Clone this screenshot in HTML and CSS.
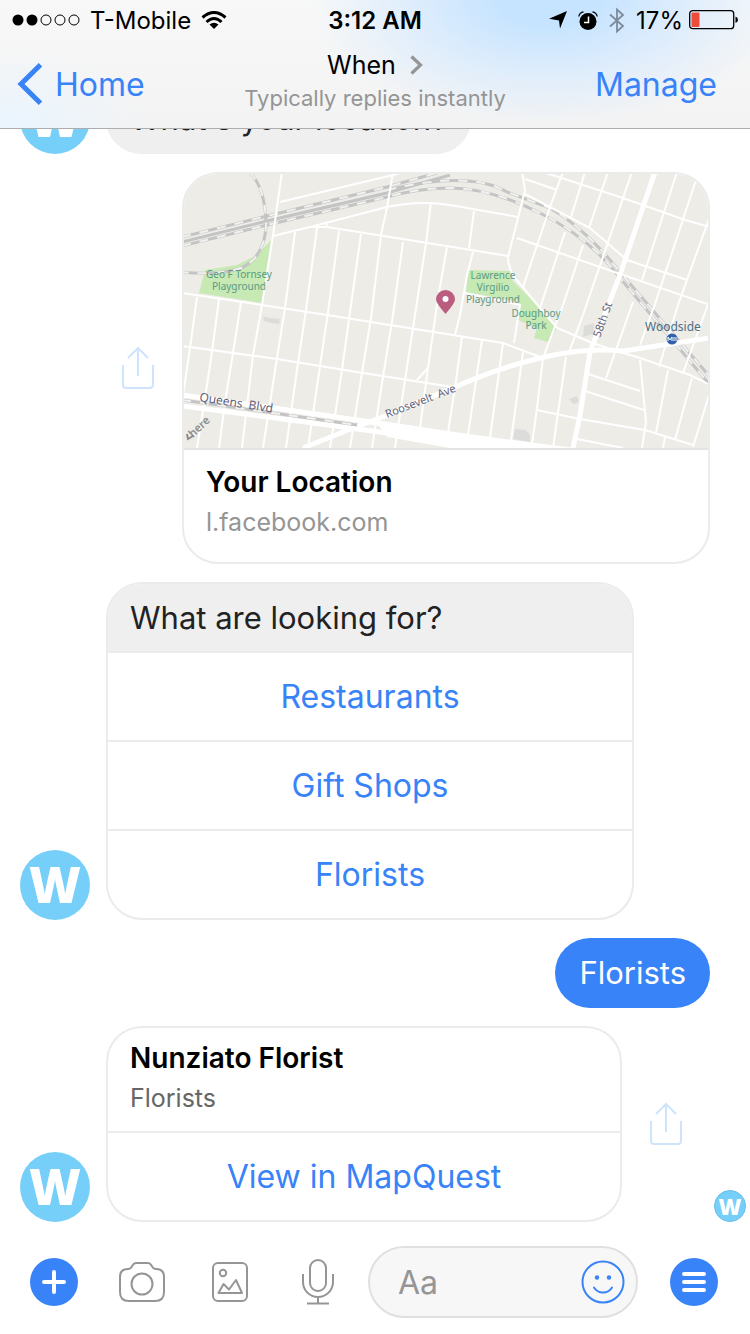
FILE: index.html
```html
<!DOCTYPE html>
<html lang="en">
<head>
    <meta charset="UTF-8">
    <meta name="viewport" content="width=device-width, initial-scale=1.0">
    <title>When</title>
    <link rel="stylesheet" href="styles.css">
</head>
<body>
    <header class="top-bar">
        <div class="status">
            <div class="status-left">
                <svg class="signal" width="68" height="12" viewBox="0 0 68 12">
                    <circle cx="6" cy="6" r="5.5"/>
                    <circle cx="20" cy="6" r="5.5"/>
                    <g fill="none" stroke="#000">
                        <circle cx="34" cy="6" r="5"/>
                        <circle cx="48" cy="6" r="5"/>
                        <circle cx="62" cy="6" r="5"/>
                    </g>
                </svg>
                <span>T-Mobile</span>
                <svg class="wifi" width="26" height="18" viewBox="0 0 26 18">
                    <g fill="none" stroke="#000" stroke-width="3">
                        <path d="M1.5 6.5Q13-3.5 24.5 6.5"/>
                        <path d="M5.5 11Q13 4 20.5 11"/>
                    </g>
                    <path d="M13 18L8.5 13.5Q13 10 17.5 13.5Z"/>
                </svg>
            </div>
            <div class="time">3:12 AM</div>
            <div class="status-right">
                <svg width="18" height="18" viewBox="0 0 18 18"><path d="M18 0L11 17.5L10 9.500L0 7.800Z"/></svg>
                <svg width="20" height="19" viewBox="0 0 20 19">
                    <circle cx="10" cy="10.500" r="8.500"/>
                    <path d="M10.500 5.500V11.500H6" fill="none" stroke="#fff" stroke-width="1.500"/>
                    <path d="M.8 5.500Q1.500 1.500 5.500.8M14.500.8Q18.500 1.500 19.200 5.500" fill="none" stroke="#000" stroke-width="1.300"/>
                </svg>
                <svg width="16" height="27" viewBox="0 0 16 27"><path d="M1 7.500L14 19L8 24.500V2.500L14 8L1 19.500" fill="none" stroke="#7b8b9b" stroke-width="1.800"/></svg>
                <div class="battery">
                    <span>17%</span>
                    <svg width="49" height="20" viewBox="0 0 49 20">
                        <rect x=".7" y=".7" width="44" height="18" rx="3" fill="none" stroke="#000" stroke-width="1.300"/>
                        <rect x="2.500" y="2.500" width="8" height="14.500" rx="1" fill="#ee4c3b"/>
                        <path d="M46.500 6.500Q49 7.500 49 9.800T46.500 13Z"/>
                    </svg>
                </div>
            </div>
        </div>
        <nav class="nav">
            <a href="#" class="back">
                <svg width="26" height="42" viewBox="0 0 26 42"><path d="M23.500 1.800L4 21L23.500 40.200" fill="none" stroke="#3883f8" stroke-width="5"/></svg>
                Home
            </a>
            <div class="title">
                <a href="#" class="name">When
                    <svg width="13" height="20" viewBox="0 0 13 20"><path d="M1.500 1.500L10.500 10L1.500 18.500" fill="none" stroke="#959595" stroke-width="3.200"/></svg>
                </a>
                <p>Typically replies instantly</p>
            </div>
            <a href="#" class="manage">Manage</a>
        </nav>
    </header>

    <main class="chat">
        <div class="row received">
            <div class="avatar">W</div>
            <div class="bubble">What's your location?</div>
        </div>

        <div class="row sent location">
            <button type="button" class="share" aria-label="Share location">
                <svg width="32" height="42" viewBox="0 0 32 42"><path d="M1 18V37.500Q1 41 4.500 41H27.500Q31 41 31 37.500V18M16 29V1M6 11L16 1L26 11" fill="none" stroke="#cfe3fd" stroke-width="2"/></svg>
            </button>
            <article class="card">
                <svg class="map" viewBox="184 174 524 274" preserveAspectRatio="xMidYMid slice" role="img" aria-label="Map of your location">
                    <rect x="182" y="172" width="528" height="278" fill="#edece7"/>
                    <!-- parks -->
                    <g fill="#c7e9b3">
                        <path d="M271 240L262 303L199 293L205 270L237 265L257 255Z"/>
                        <path d="M468 270L466 292L520 302L518 320L537 328L534 338L548 342L557 328L540 308L512 280L510 271Z"/>
                    </g>
                    <!-- buildings -->
                    <g fill="#dcdcda">
                        <path d="M263 316L269 318L280 319L279 324L271 323L264 321Z"/>
                        <path d="M584 326L594 323L593 334L583 337Z"/>
                        <path d="M569 399L577 396L579 402L573 404Z"/>
                        <path d="M515 429L526 430L530 435L530 442L513 439Z"/>
                    </g>
                    <!-- railways -->
                    <g class="rail">
                        <path d="M182 237L263 217L387 187L440 172"/>
                        <path d="M182 242L267 221L387 193L450 175"/>
                        <path d="M182 246L267 225L387 197Q420 188 450 188Q490 188 540 213T620 278L710 385"/>
                        <path d="M387 190Q470 170 507 192L550 208Q585 228 620 272L710 377"/>
                        <path d="M250 172Q260 184 263 198Q269 225 263 243Q255 267 230 271Q205 275 182 272"/>
                    </g>
                    <g class="rail-dash">
                        <path d="M182 237L263 217L387 187L440 172"/>
                        <path d="M182 246L267 225L387 197Q420 188 450 188Q490 188 540 213T620 278L710 385"/>
                        <path d="M387 190Q470 170 507 192L550 208Q585 228 620 272L710 377"/>
                        <path d="M250 172Q260 184 263 198Q269 225 263 243Q255 267 230 271Q205 275 182 272"/>
                    </g>
                    <!-- streets -->
                    <g class="street">
                        <path d="M282 172L273 235L262 305L253 355L242 448M280 202L393 175L403 172M273 236L310 227L387 207Q420 200 450 205L518 217"/>
                        <path d="M310 227L327 227L440 245L508 256M326 222L327 227M393 172L387 208L381 235L371 318L362 373L350 448"/>
                        <path d="M182 293L262 305L327 315L440 333L503 343L543 358M182 346L277 359L363 373L427 383L453 387"/>
                        <path d="M295 232L285 308L277 358L263 448M317 228L306 310L298 363L286 448M339 231L328 312L320 366L308 448M361 234L350 312L342 370L330 448"/>
                        <path d="M403 242L393 315L383 377L372 448M431 202L426 243L415 315L405 380L395 448M447 247L438 298L428 368L420 428M417 380L428 368"/>
                        <path d="M197 297L190 348L183 395M219 299L212 352L205 398L197 448M241 302L233 353L225 402L219 448"/>
                        <path d="M474 211L469 248M473 252L467 275L460 315L455 335M465 293L520 305L514 343"/>
                        <path d="M462 337L455 388L448 432M482 340L468 435M503 343L490 438M523 352L511 441M543 358L537 408L532 444M566 357L553 448"/>
                        <path d="M522 172L525 190L518 218L508 257Q508 268 515 278L540 308L557 328L590 342L613 350L640 358L690 375L710 385"/>
                        <path d="M525 179L557 190M543 172L623 198L685 220L710 227M525 194L590 228L627 260L687 280M517 238L620 274L710 305"/>
                        <path d="M563 172L550 207L523 287M585 172L571 217M565 232L540 308M608 172L589 228M583 245L563 305L543 358M632 172L607 245L583 315L569 352"/>
                        <path d="M677 172L642 280M696 180L655 304M710 216L678 305L659 367M633 302L606 378M710 299L683 373M655 304L640 345"/>
                        <path d="M668 370L656 433M692 378L675 440M710 392L693 447M640 360L646 422L642 448M588 374L640 391M585 391L644 410M537 410L580 419L645 430L693 445M577 439L623 448M665 437L663 448"/>
                    </g>
                    <!-- avenues -->
                    <g class="avenue">
                        <path d="M655 172L643 207L620 275L590 352L580 415L573 448"/>
                        <path d="M303 448L353 428L380 418L455 387Q495 369 540 358T623 351L710 338"/>
                        <path d="M182 395L267 407L357 420L450 434M182 406L313 423L387 433L450 443"/>
                    </g>
                    <path d="M375 420L440 430L520 441L575 448H450L387 437Z" fill="#fff"/>
                    <path class="rail" d="M182 400L357 425"/>
                    <path class="rail-dash" d="M182 400L357 425"/>
                    <!-- labels -->
                    <g class="park-label">
                        <text x="239" y="278">Geo F Tornsey</text>
                        <text x="239" y="290">Playground</text>
                        <text x="493" y="279">Lawrence</text>
                        <text x="493" y="291">Virgilio</text>
                        <text x="493" y="303">Playground</text>
                        <text x="536" y="317">Doughboy</text>
                        <text x="536" y="329">Park</text>
                    </g>
                    <g class="street-label">
                        <text transform="translate(199 401) rotate(9)" xml:space="preserve">Queens  Blvd</text>
                        <text class="small" transform="translate(387 418) rotate(-21)" xml:space="preserve">Roosevelt  Ave</text>
                        <text class="small" transform="translate(600 338) rotate(-70)">58th St</text>
                        <text class="station" x="645" y="331">Woodside</text>
                        <text class="here" transform="translate(193 438) rotate(-44)">here</text>
                    </g>
                    <path d="M187 434L188 439L193 436" fill="none" stroke="#8c8c8c" stroke-width="2"/>
                    <circle cx="672" cy="339" r="5.500" fill="#2f62a8"/>
                    <path d="M668 341V337L670 340L672 337V341M674 337V341M676 337V341" fill="none" stroke="#fff"/>
                    <path d="M445.500 314Q436 303 436 299.500A9.500 9.500 0 1 1 455 299.500Q455 303 445.500 314Z" fill="#bb5d7f"/>
                    <circle cx="445.500" cy="299" r="3" fill="#fff"/>
                </svg>
                <div class="card-text">
                    <h2>Your Location</h2>
                    <p>l.facebook.com</p>
                </div>
            </article>
        </div>

        <div class="row received options">
            <div class="avatar">W</div>
            <article class="card">
                <p class="question">What are looking for?</p>
                <button type="button" class="option">Restaurants</button>
                <button type="button" class="option">Gift Shops</button>
                <button type="button" class="option">Florists</button>
            </article>
        </div>

        <div class="row sent">
            <div class="bubble blue">Florists</div>
        </div>

        <div class="row received result">
            <div class="avatar">W</div>
            <article class="card">
                <div class="card-text">
                    <h2>Nunziato Florist</h2>
                    <p>Florists</p>
                </div>
                <a href="#" class="option">View in MapQuest</a>
            </article>
            <button type="button" class="share" aria-label="Share florist">
                <svg width="32" height="42" viewBox="0 0 32 42"><path d="M1 18V37.500Q1 41 4.500 41H27.500Q31 41 31 37.500V18M16 29V1M6 11L16 1L26 11" fill="none" stroke="#cfe3fd" stroke-width="2"/></svg>
            </button>
            <div class="avatar seen">W</div>
        </div>
    </main>

    <form class="composer">
        <div class="tools">
            <button type="button" class="round" aria-label="More">
                <svg width="24" height="24" viewBox="0 0 24 24"><path d="M12 2V22M2 12H22" stroke="#fff" stroke-width="4" stroke-linecap="round"/></svg>
            </button>
            <button type="button" aria-label="Camera">
                <svg width="46" height="40" viewBox="0 0 46 40" fill="none" stroke="#959595" stroke-width="2">
                    <path d="M9 7C12 7 12.500 5.500 13.500 3.500Q14.800 1 17 1H29Q31.200 1 32.500 3.500C33.500 5.500 34 7 37 7Q45 7 45 15V30Q45 39 36 39H10Q1 39 1 30V15Q1 7 9 7Z"/>
                    <circle cx="23" cy="22" r="10.500"/>
                </svg>
            </button>
            <button type="button" aria-label="Photos">
                <svg width="36" height="40" viewBox="0 0 36 40" fill="none" stroke="#959595" stroke-width="2" stroke-linejoin="round">
                    <rect x="1" y="1" width="34" height="38" rx="5"/>
                    <circle cx="11" cy="11" r="3.200"/>
                    <path d="M6.500 31L11.500 22L17 27.500L24 18L30 31Z"/>
                </svg>
            </button>
            <button type="button" aria-label="Voice message">
                <svg width="32" height="46" viewBox="0 0 32 46" fill="none" stroke="#959595" stroke-width="2">
                    <rect x="8" y="1" width="16" height="31" rx="8"/>
                    <path d="M1 15V23A15 15 0 0 0 31 23V15M16 38V44M5 44.500H27"/>
                </svg>
            </button>
        </div>
        <div class="field">
            <input type="text" placeholder="Aa" aria-label="Message">
            <button type="button" class="emoji" aria-label="Emoji">
                <svg width="44" height="44" viewBox="0 0 44 44" fill="none" stroke="#3883f8" stroke-width="2">
                    <circle cx="22" cy="22" r="20.500"/>
                    <path d="M13 27.500Q16 32.500 22 32.500T31 27.500" stroke-linecap="round"/>
                    <g fill="#3883f8" stroke="none"><circle cx="16" cy="17.500" r="2.200"/><circle cx="28" cy="17.500" r="2.200"/></g>
                </svg>
            </button>
        </div>
        <button type="button" class="round" aria-label="Menu">
            <svg width="24" height="20" viewBox="0 0 24 20"><path d="M2 2H22M2 10H22M2 18H22" stroke="#fff" stroke-width="4" stroke-linecap="round"/></svg>
        </button>
    </form>
</body>
</html>
```
FILE: styles.css
```css
* {
    box-sizing: border-box;
}

body {
    margin: 0;
    height: 100vh;
    display: flex;
    flex-direction: column;
    font-family: Inter, "Liberation Sans", sans-serif;
    background: #fff;
    color: #000;
}

h2, p {
    margin: 0;
}

a {
    color: #3883f8;
    text-decoration: none;
}

button {
    padding: 0;
    border: none;
    background: none;
    font-family: inherit;
    cursor: pointer;
}

svg {
    display: block;
    flex: none;
}

.top-bar {
    flex: none;
    border-bottom: 1px solid #adadad;
    background:
        radial-gradient(ellipse 240px 125px at 73% 0, #c6e4ff 20%, rgba(210, 232, 255, 0.7) 55%, rgba(240, 245, 252, 0) 100%),
        radial-gradient(ellipse 150px 80px at 0 100%, #e9f5ff, rgba(247, 247, 247, 0)),
        linear-gradient(#f8f8f8, #f3f3f3);
}

.status {
    display: grid;
    grid-template-columns: 1fr auto 1fr;
    align-items: center;
    height: 40px;
    padding: 0 12px;
    font-size: 24px;
}

.status-left,
.status-right,
.battery {
    display: flex;
    align-items: center;
}

.status-left {
    gap: 10px;
}

.status-right {
    justify-content: flex-end;
    gap: 11px;
}

.battery {
    gap: 6px;
}

.time {
    font-weight: 600;
}

.nav {
    display: grid;
    grid-template-columns: 1fr auto 1fr;
    align-items: center;
    height: 88px;
    padding: 0 17px;
}

.back {
    display: flex;
    align-items: center;
    gap: 12px;
    font-size: 32px;
}

.manage {
    justify-self: end;
    padding-right: 16px;
    font-size: 32px;
}

.title {
    text-align: center;
}

.name {
    display: flex;
    justify-content: center;
    align-items: center;
    gap: 14px;
    font-size: 25px;
    line-height: 34px;
    color: #000;
}

.title p {
    margin-bottom: 6px;
    font-size: 22px;
    line-height: 32px;
    color: #959595;
}

.chat {
    flex: 1;
    min-height: 0;
    display: flex;
    flex-direction: column;
    justify-content: flex-end;
    gap: 18px;
    padding-bottom: 24px;
    overflow: hidden;
}

.row {
    flex: none;
    display: flex;
    align-items: flex-end;
    gap: 16px;
    padding: 0 40px 0 20px;
}

.sent {
    justify-content: flex-end;
}

.location {
    gap: 28px;
    padding-left: 122px;
}

.options {
    padding-right: 116px;
}

.result {
    padding-right: 4px;
}

.avatar {
    flex: none;
    width: 70px;
    height: 70px;
    border-radius: 50%;
    background: #76cff9;
    color: #fff;
    font-family: "Open Sans", sans-serif;
    font-size: 50px;
    font-weight: 800;
    line-height: 68px;
    text-align: center;
}

.seen {
    width: 32px;
    height: 32px;
    margin-left: 16px;
    border: 1px solid #69bde6;
    font-size: 22px;
    line-height: 30px;
}

.bubble {
    padding: 0 24px;
    border-radius: 35px;
    background: #efefef;
    color: #222;
    font-size: 31px;
    line-height: 70px;
}

.blue {
    background: #3883f8;
    color: #fff;
}

.share {
    flex: none;
    align-self: center;
}

.result .share {
    margin-left: 12px;
}

.card {
    flex: 1;
    min-width: 0;
    border: 2px solid #ebebeb;
    border-radius: 36px;
    overflow: hidden;
}

.map {
    width: 100%;
    height: 276px;
    border-bottom: 2px solid #e4e4e2;
}

.card-text {
    padding: 10px 22px 13px;
}

.location .card-text {
    padding: 12px 22px 20px;
}

.card h2 {
    font-size: 28px;
    font-weight: 600;
    line-height: 40px;
}

.card-text p {
    font-size: 25px;
    line-height: 40px;
    color: #959595;
}

.result .card-text p {
    color: #666;
}

.question {
    padding: 0 22px;
    background: #efefef;
    color: #222;
    font-size: 31px;
    line-height: 67px;
}

.option {
    display: block;
    width: 100%;
    border-top: 2px solid #ebebeb;
    color: #3883f8;
    font-size: 32px;
    line-height: 87px;
    text-align: center;
}

.composer {
    flex: none;
    display: flex;
    align-items: center;
    padding: 0 32px 16px 30px;
}

.tools {
    display: flex;
    gap: 40px;
}

.tools button {
    display: flex;
    justify-content: center;
    align-items: center;
    width: 48px;
    height: 48px;
}

.composer .round {
    display: flex;
    flex: none;
    justify-content: center;
    align-items: center;
    width: 48px;
    height: 48px;
    border-radius: 50%;
    background: #3883f8;
}

.field {
    flex: 1;
    min-width: 0;
    display: flex;
    align-items: center;
    height: 72px;
    margin: 0 32px 0 26px;
    padding: 0 11px 0 28px;
    border: 2px solid #e0e0e0;
    border-radius: 36px;
    background: #f7f7f7;
}

.field input {
    flex: 1;
    min-width: 0;
    padding: 0;
    border: none;
    outline: none;
    background: none;
    font-family: inherit;
    font-size: 32px;
}

.field input::placeholder {
    color: #959595;
}

/* map */
.rail {
    fill: none;
    stroke: #c4c4c4;
    stroke-width: 3;
}

.rail-dash {
    fill: none;
    stroke: #f1f1ef;
    stroke-width: 2;
    stroke-dasharray: 9 9;
}

.street {
    fill: none;
    stroke: #fff;
    stroke-width: 2;
}

.avenue {
    fill: none;
    stroke: #fff;
    stroke-width: 5;
}

.park-label {
    font-family: "Noto Sans", sans-serif;
    font-size: 10px;
    fill: #5b9a84;
    text-anchor: middle;
}

.street-label {
    font-family: "Noto Sans", sans-serif;
    font-size: 12px;
    fill: #606078;
}

.street-label .small {
    font-size: 11px;
}

.street-label .station {
    font-size: 12px;
    fill: #4c7088;
}

.street-label .here {
    font-size: 11px;
    font-weight: 600;
    fill: #8c8c8c;
}
```
